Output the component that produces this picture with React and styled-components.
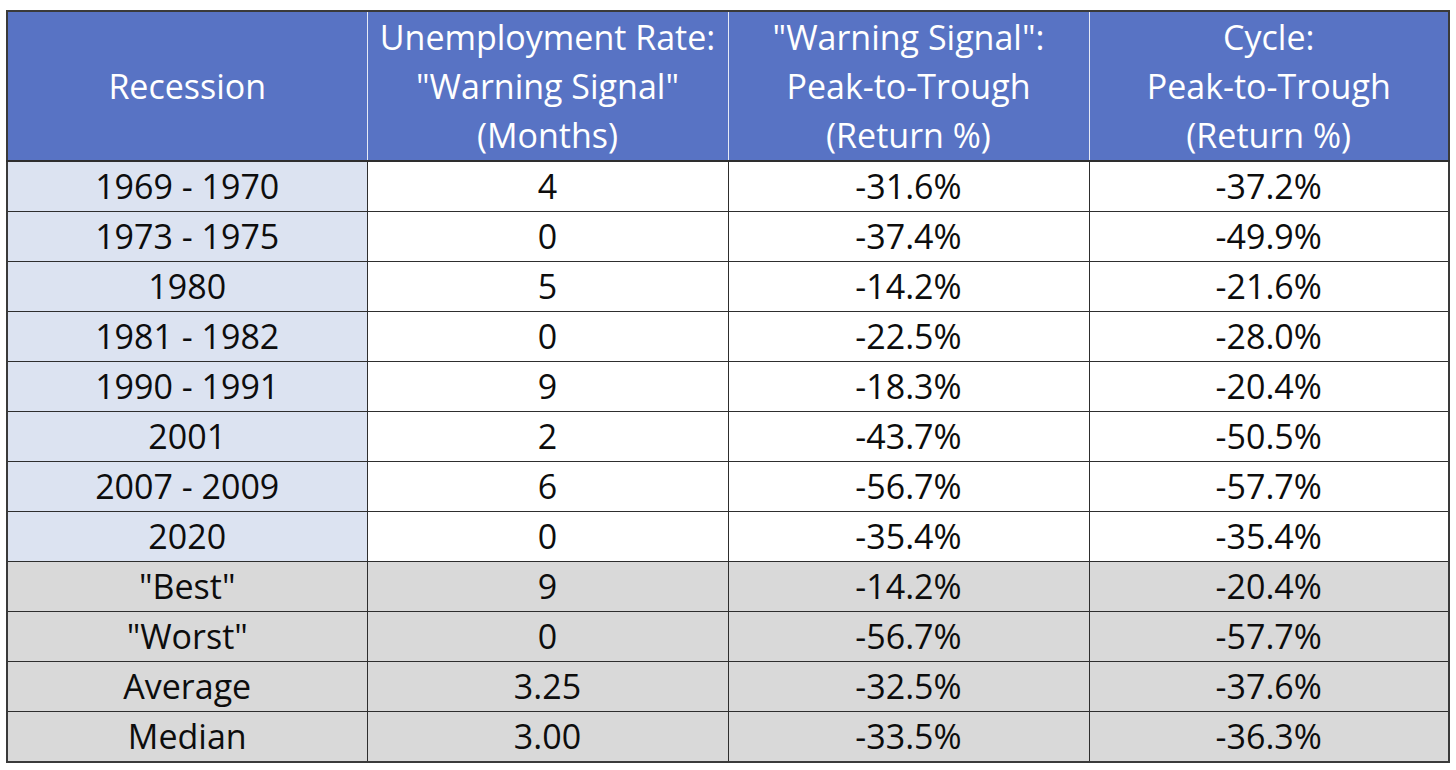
import styled, { createGlobalStyle } from 'styled-components';

const GlobalStyle = createGlobalStyle`
  html, body {
    margin: 0;
    padding: 0;
    background: #ffffff;
  }
  body {
    font-family: "Open Sans", "Noto Sans", sans-serif;
  }
`;

const Page = styled.div`
  width: 1456px;
  height: 770px;
  padding: 10px 0 0 6px;
  box-sizing: border-box;
  background: #ffffff;
`;

const Table = styled.table`
  border-collapse: collapse;
  table-layout: fixed;
  width: 1442px;
  border: 2px solid #3a3a3a;
`;

const HeadCell = styled.th`
  height: 148px;
  padding: 0;
  background: #5873c4;
  color: #ffffff;
  font-weight: 400;
  font-size: 34px;
  line-height: 49px;
  text-align: center;
  vertical-align: middle;
  border-left: 1px solid #e6eaf6;
  &:first-child {
    border-left: none;
  }
`;

const Cell = styled.td`
  height: 49px;
  padding: 0;
  font-size: 34px;
  line-height: 49px;
  color: #0d0d0d;
  text-align: center;
  vertical-align: middle;
  border: 1px solid #2e2e2e;
  border-top-width: ${p => (p.$first ? '2px' : '1px')};
  background: ${p => (p.$summary ? '#d9d9d9' : p.$label ? '#dce3f1' : '#ffffff')};
`;

const headers = [
  ['Recession'],
  ['Unemployment Rate:', '"Warning Signal"', '(Months)'],
  ['"Warning Signal":', 'Peak-to-Trough', '(Return %)'],
  ['Cycle:', 'Peak-to-Trough', '(Return %)'],
];

const rows = [
  ['1969 - 1970', '4', '-31.6%', '-37.2%'],
  ['1973 - 1975', '0', '-37.4%', '-49.9%'],
  ['1980', '5', '-14.2%', '-21.6%'],
  ['1981 - 1982', '0', '-22.5%', '-28.0%'],
  ['1990 - 1991', '9', '-18.3%', '-20.4%'],
  ['2001', '2', '-43.7%', '-50.5%'],
  ['2007 - 2009', '6', '-56.7%', '-57.7%'],
  ['2020', '0', '-35.4%', '-35.4%'],
];

const summary = [
  ['"Best"', '9', '-14.2%', '-20.4%'],
  ['"Worst"', '0', '-56.7%', '-57.7%'],
  ['Average', '3.25', '-32.5%', '-37.6%'],
  ['Median', '3.00', '-33.5%', '-36.3%'],
];

const widths = [360, 361, 361, 360];

export default function App() {
  return (
    <Page>
      <GlobalStyle />
      <Table>
        <colgroup>
          {widths.map((w, i) => (
            <col key={i} style={{ width: w }} />
          ))}
        </colgroup>
        <thead>
          <tr>
            {headers.map((lines, i) => (
              <HeadCell key={i}>
                {lines.map((l, j) => (
                  <div key={j}>{l}</div>
                ))}
              </HeadCell>
            ))}
          </tr>
        </thead>
        <tbody>
          {rows.map((r, i) => (
            <tr key={i}>
              {r.map((v, j) => (
                <Cell key={j} $label={j === 0} $first={i === 0}>
                  {v}
                </Cell>
              ))}
            </tr>
          ))}
          {summary.map((r, i) => (
            <tr key={'s' + i}>
              {r.map((v, j) => (
                <Cell key={j} $summary>
                  {v}
                </Cell>
              ))}
            </tr>
          ))}
        </tbody>
      </Table>
    </Page>
  );
}
